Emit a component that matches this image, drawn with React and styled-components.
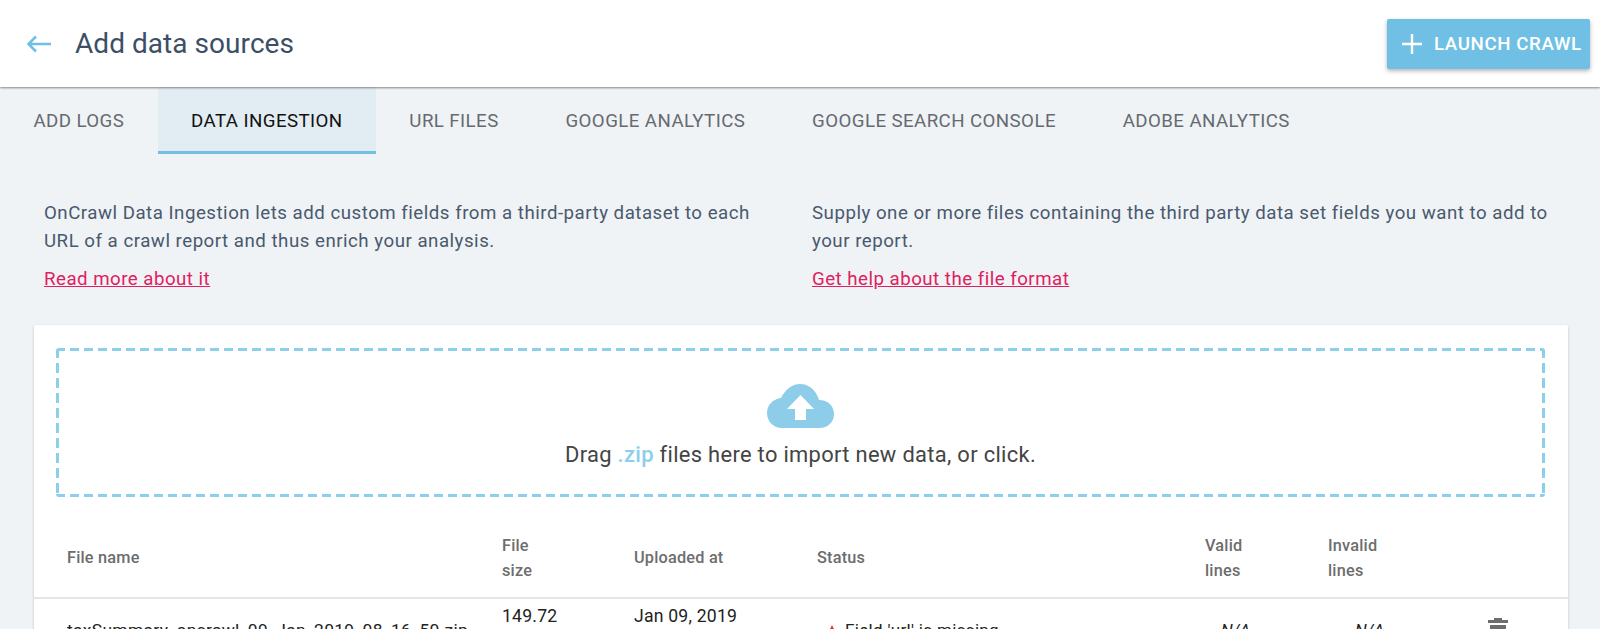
import React from "react";
import styled, { createGlobalStyle } from "styled-components";

const Global = createGlobalStyle`
  html, body { margin: 0; padding: 0; height: 629px; overflow: hidden; background: #eff3f6; }
  body { font-family: Roboto, "Liberation Sans", sans-serif; }
  * { box-sizing: border-box; }
`;
const Page = styled.div`height: 629px; overflow: hidden; display: flex; flex-direction: column;`;
const Header = styled.header`
  flex: none; height: 87px; background: #fff; display: flex; align-items: center;
  justify-content: space-between; padding: 0 10px 0 26px;
  box-shadow: 0 1px 2px rgba(0,0,0,.45); position: relative; z-index: 1;
`;
const TitleGroup = styled.div`display: flex; align-items: center; gap: 24px;`;
const Title = styled.h1`margin: 0; font-size: 28px; font-weight: 400; color: #3c4f66; letter-spacing: .05px;`;
const LaunchButton = styled.button`
  width: 203px; height: 50px; background: #70bfe4; border: 0; border-radius: 2px; color: #fff;
  display: flex; align-items: center; gap: 12px; padding: 0 0 0 15px; white-space: nowrap;
  font: 500 18.7px Roboto, sans-serif; letter-spacing: .6px; text-transform: uppercase;
  box-shadow: 0 2px 4px rgba(0,0,0,.3);
`;
const Tabs = styled.nav`flex: none; display: flex; height: 67px;`;
const Tab = styled.div`
  padding: 4px 33.4px 0; height: 67px; display: flex; align-items: center;
  font-size: 18.7px; letter-spacing: .42px; text-transform: uppercase; white-space: nowrap;
  color: ${p => p.$active ? "#111" : "#666a70"};
  background: ${p => p.$active ? "#e2edf3" : "transparent"};
  border-bottom: 3px solid ${p => p.$active ? "#70bfe4" : "transparent"};
`;
const Intro = styled.section`
  flex: none; display: grid; grid-template-columns: 768px 1fr; padding: 45px 32px 0 44px; height: 171px;
`;
const IntroColumn = styled.div`max-width: 730px;`;
const IntroText = styled.p`margin: 0; font-size: 18.7px; line-height: 28px; color: #4a596d; letter-spacing: .5px;`;
const HelpLink = styled.a`
  display: block; margin-top: 10px; font-size: 18.7px; line-height: 28px; color: #e0205f;
  text-decoration: underline; letter-spacing: .48px;
`;
const Card = styled.section`
  flex: none; margin: 0 32px 0 34px; background: #fff; border-radius: 2px; padding: 23px 0 0;
  box-shadow: 0 1px 3px rgba(0,0,0,.2);
`;
const DropZone = styled.div`
  height: 149px; margin: 0 23px 0 22px; border-radius: 3px;
  background-image:
    repeating-linear-gradient(90deg, #8bcfec 0 9px, transparent 9px 14px),
    repeating-linear-gradient(90deg, #8bcfec 0 9px, transparent 9px 14px),
    repeating-linear-gradient(180deg, #8bcfec 0 10px, transparent 10px 15px),
    repeating-linear-gradient(180deg, #8bcfec 0 10px, transparent 10px 15px);
  background-size: 100% 3px, 100% 3px, 3px 100%, 3px 100%;
  background-position: 0 0, 0 100%, 0 0, 100% 0;
  background-repeat: no-repeat;
  display: flex; flex-direction: column; align-items: center; padding-top: 36px;
  color: #444; font-size: 21.9px; letter-spacing: .32px;
`;
const DropText = styled.div`margin-top: 14px;`;
const Zip = styled.b`color: #8bcfec; font-weight: 500;`;
const Row = styled.div`
  display: grid; grid-template-columns: 435px 132px 183px 388px 123px 140px 1fr;
  padding-left: 33px; line-height: 25px;
`;
const HeadRow = styled(Row)`
  height: 102px; align-items: center; padding-top: 21px; border-bottom: 2px solid #e3e5e8;
  font-weight: 500; color: #6d6d6d; font-size: 16.3px; letter-spacing: .2px;
`;
const BodyRow = styled(Row)`color: #222; align-items: start; padding-top: 5px;`;
const NameCell = styled.div`padding-top: 14px; font-size: 17.4px; letter-spacing: .33px; white-space: nowrap;`;
const TwoLine = styled.div`font-size: 17.6px; letter-spacing: .22px;`;
const StatusCell = styled.div`display: flex; align-items: center; gap: 7px; padding: 14px 0 0 9px; font-size: 17px; letter-spacing: .33px;`;
const NaCell = styled.div`padding: 14px 0 0 ${p => p.$inset}px; font-style: italic; font-size: 17px;`;
const TrashCell = styled.div`padding: 13px 0 0 20px; color: #6d6d6d;`;

const BackArrow = () => (
  <svg width="25" height="18" viewBox="0 0 25 18" fill="none" stroke="#70bfe4" strokeWidth="2.5">
    <path d="M25 9H2.500M10 1.500 2.500 9l7.500 7.500" />
  </svg>
);
const Plus = () => (
  <svg width="20" height="20" viewBox="0 0 20 20" stroke="#fff" strokeWidth="2.4"><path d="M10 0v20M0 10h20" /></svg>
);
const Cloud = () => (
  <svg width="67" height="44" viewBox="0 0 67 44">
    <path fill="#8dcdea" d="M15 44C6 44 0 37 0 29c0-8 6-14 14-15C18 6 25 0 33 0c9 0 16 6 19 16 9 0 15 6 15 14 0 8-6 14-15 14z" />
    <path fill="#fff" d="M33.500 11 47 25h-8v11H28V25h-8z" />
  </svg>
);
const Trash = () => (
  <svg width="20" height="24" viewBox="0 0 20 24" fill="currentColor">
    <path d="M0 3h6V1h8v2h6v3H0zM2 8h16v16H2z" />
  </svg>
);
const Warn = () => (
  <svg width="12" height="12" viewBox="0 0 12 12"><path fill="#e53935" d="M6 0l6 12H0z" /></svg>
);

export default function App() {
  return (
    <Page>
      <Global />
      <Header>
        <TitleGroup><BackArrow /><Title>Add data sources</Title></TitleGroup>
        <LaunchButton><Plus />Launch crawl</LaunchButton>
      </Header>
      <Tabs>
        <Tab>Add logs</Tab>
        <Tab $active>Data ingestion</Tab>
        <Tab>URL files</Tab>
        <Tab>Google Analytics</Tab>
        <Tab>Google Search Console</Tab>
        <Tab>Adobe Analytics</Tab>
      </Tabs>
      <Intro>
        <IntroColumn>
          <IntroText>OnCrawl Data Ingestion lets add custom fields from a third-party dataset to each URL of a crawl report and thus enrich your analysis.</IntroText>
          <HelpLink>Read more about it</HelpLink>
        </IntroColumn>
        <div>
          <IntroText>Supply one or more files containing the third party data set fields you want to add to your report.</IntroText>
          <HelpLink>Get help about the file format</HelpLink>
        </div>
      </Intro>
      <Card>
        <DropZone>
          <Cloud />
          <DropText>Drag <Zip>.zip</Zip> files here to import new data, or click.</DropText>
        </DropZone>
        <HeadRow>
          <div>File name</div><div>File<br />size</div><div>Uploaded at</div><div>Status</div>
          <div>Valid<br />lines</div><div>Invalid<br />lines</div><div />
        </HeadRow>
        <BodyRow>
          <NameCell>taxSummary_oncrawl_09_Jan_2019_08_16_50.zip</NameCell>
          <TwoLine>149.72</TwoLine>
          <TwoLine>Jan 09, 2019</TwoLine>
          <StatusCell><Warn />Field 'url' is missing</StatusCell>
          <NaCell $inset={16}>N/A</NaCell>
          <NaCell $inset={27}>N/A</NaCell>
          <TrashCell><Trash /></TrashCell>
        </BodyRow>
      </Card>
    </Page>
  );
}
